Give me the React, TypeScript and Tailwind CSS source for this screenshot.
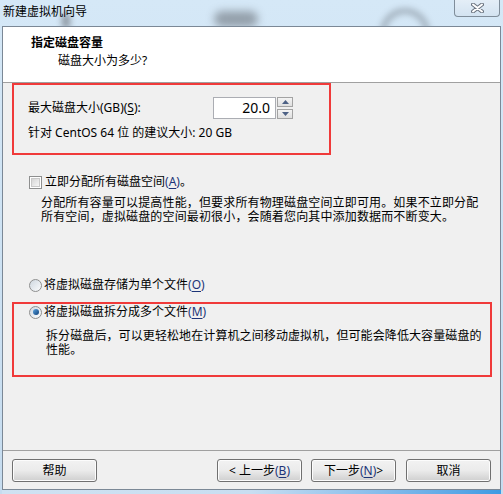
import React from "react";

const Key = ({ k, blue = true }: { k: string; blue?: boolean }) => (
    <span className={blue ? "text-[#1c3477]" : ""}>
        (<span className="underline underline-offset-2">{k}</span>)
    </span>
);

const CheckBox = () => (
    <span className="flex h-[13px] w-[13px] items-center justify-center border border-[#8e8f8f] bg-white">
        <span className="h-[9px] w-[9px] border border-[#c9c9c9] bg-gradient-to-br from-[#d6d6d6] to-[#f6f6f6]" />
    </span>
);

const Radio = ({ checked = false }: { checked?: boolean }) => (
    <span className="flex h-[13px] w-[13px] items-center justify-center rounded-full border border-[#8e8f8f] bg-gradient-to-br from-[#cfd8e0] to-[#fbfcfd]">
        {checked && (
            <span className="h-[6px] w-[6px] rounded-full bg-gradient-to-br from-[#5aa4e0] to-[#0c3f7a]" />
        )}
    </span>
);

const Button = ({ children, className = "" }: { children: React.ReactNode; className?: string }) => (
    <button
        className={`flex h-[23px] w-[85px] items-center justify-center rounded-[3px] border border-[#707070] bg-gradient-to-b from-[#f2f2f2] via-[#ebebeb] to-[#cfcfcf] text-[12px] leading-[16px] text-black shadow-[inset_0_0_0_1px_#fcfcfc] ${className}`}
    >
        {children}
    </button>
);

export default function App() {
    return (
        <div className="relative h-[494px] w-[503px] overflow-hidden bg-gradient-to-b from-[#d5e8f7] to-[#c6dcef] font-['Noto_Sans','Noto_Sans_CJK_SC',sans-serif] text-black">
            {/* desktop showing through the glass frame */}
            <div className="absolute left-[62px] top-[14px] h-[14px] w-[8px] bg-[#5c6168] opacity-60 blur-[3px]" />
            <div className="absolute left-[214px] top-[11px] h-[16px] w-[44px] rounded-full bg-[#555a61] opacity-50 blur-[4px]" />
            <div className="absolute left-[380px] top-[8px] h-[50px] w-[50px] rounded-full border-[6px] border-[#5b636c] opacity-40 blur-[3px]" />

            <div className="relative flex h-[26px] items-start justify-between">
                <span className="pl-[3px] pt-[4px] text-[12px] leading-[16px]">新建虚拟机向导</span>
                <button className="mr-[3px] flex h-[17px] w-[46px] items-center justify-center rounded-b-[4px] border border-t-0 border-[#7f8d9a] bg-gradient-to-b from-[#e4eef7] to-[#d3e3f1]">
                    <svg width="13" height="10" viewBox="0 0 13 10">
                        <path d="M2 1.5 L11 8.5 M11 1.5 L2 8.5" stroke="#6b7480" strokeWidth="4" strokeLinecap="round" />
                        <path d="M2 1.5 L11 8.5 M11 1.5 L2 8.5" stroke="#ffffff" strokeWidth="2" strokeLinecap="round" />
                    </svg>
                </button>
            </div>

            <div className="relative mx-[2px] flex h-[464px] flex-col border border-[#7b8896] bg-[#f0f0f0]">
                <div className="h-[56px] border-b border-[#a0a0a0] bg-white pl-[28px] pt-[8px]">
                    <div className="text-[12px] font-bold leading-[16px]">指定磁盘容量</div>
                    <div className="ml-[27px] mt-[2px] text-[12px] leading-[16px]">磁盘大小为多少?</div>
                </div>

                <div className="ml-[9px] h-[72px] w-[319px] border-2 border-[#f03a3a]">
                    <div className="mt-[12px] flex h-[22px] items-center pl-[14px]">
                        <span className="w-[185px] text-[12px] leading-[16px]">
                            最大磁盘大小(GB)<Key k="S" blue={false} />:
                        </span>
                        <div className="flex h-[22px] w-[63px] items-center justify-end border border-[#abadb3] bg-white pr-[5px] text-[14px] leading-[16px]">
                            20.0
                        </div>
                        <div className="ml-px flex h-[22px] w-[16px] flex-col justify-between">
                            <span className="flex h-[10px] items-center justify-center border border-[#a3a3a3] bg-gradient-to-b from-[#f4f4f4] to-[#e0e0e0]">
                                <svg width="7" height="4" viewBox="0 0 7 4">
                                    <path d="M0 4 L3.5 0 L7 4 Z" fill="#4d6185" />
                                </svg>
                            </span>
                            <span className="flex h-[10px] items-center justify-center border border-[#a3a3a3] bg-gradient-to-b from-[#f4f4f4] to-[#e0e0e0]">
                                <svg width="7" height="4" viewBox="0 0 7 4">
                                    <path d="M0 0 L7 0 L3.5 4 Z" fill="#4d6185" />
                                </svg>
                            </span>
                        </div>
                    </div>
                    <div className="mt-[6px] pl-[14px] text-[12px] leading-[16px]">针对 CentOS 64 位 的建议大小: 20 GB</div>
                </div>

                <div className="ml-[26px] mt-[19px] flex h-[16px] items-center gap-[3px] text-[12px] leading-[16px]">
                    <CheckBox />
                    <span>
                        立即分配所有磁盘空间<Key k="A" />。
                    </span>
                </div>
                <div className="ml-[38px] mt-[6px] flex flex-col whitespace-nowrap text-[12px] leading-[14px] tracking-[0.15px]">
                    <span>分配所有容量可以提高性能，但要求所有物理磁盘空间立即可用。如果不立即分配</span>
                    <span>所有空间，虚拟磁盘的空间最初很小，会随着您向其中添加数据而不断变大。</span>
                </div>

                <div className="ml-[26px] mt-[53px] flex h-[16px] items-center gap-[2px] text-[12px] leading-[16px]">
                    <Radio />
                    <span>
                        将虚拟磁盘存储为单个文件<Key k="O" />
                    </span>
                </div>

                <div className="ml-[9px] mt-[9px] h-[75px] w-[480px] border-2 border-[#f03a3a]">
                    <div className="ml-[15px] flex h-[16px] items-center gap-[2px] text-[12px] leading-[16px]">
                        <Radio checked />
                        <span>
                            将虚拟磁盘拆分成多个文件<Key k="M" />
                        </span>
                    </div>
                    <div className="ml-[32px] mt-[9px] flex flex-col whitespace-nowrap text-[12px] leading-[14px] tracking-[0.1px]">
                        <span>拆分磁盘后，可以更轻松地在计算机之间移动虚拟机，但可能会降低大容量磁盘的</span>
                        <span>性能。</span>
                    </div>
                </div>

                <div className="flex-1" />

                <div className="flex h-[39px] items-start border-t border-[#a0a0a0] px-[9px] pt-[8px]">
                    <Button>帮助</Button>
                    <Button className="ml-auto">
                        &lt; 上一步<Key k="B" />
                    </Button>
                    <Button className="ml-[9px]">
                        下一步<Key k="N" /> &gt;
                    </Button>
                    <Button className="ml-[10px]">取消</Button>
                </div>
            </div>

            <div className="mx-[2px] h-[4px] bg-gradient-to-r from-[#cfe2f2] via-[#c8def1] to-[#3d9be3]" />
        </div>
    );
}
